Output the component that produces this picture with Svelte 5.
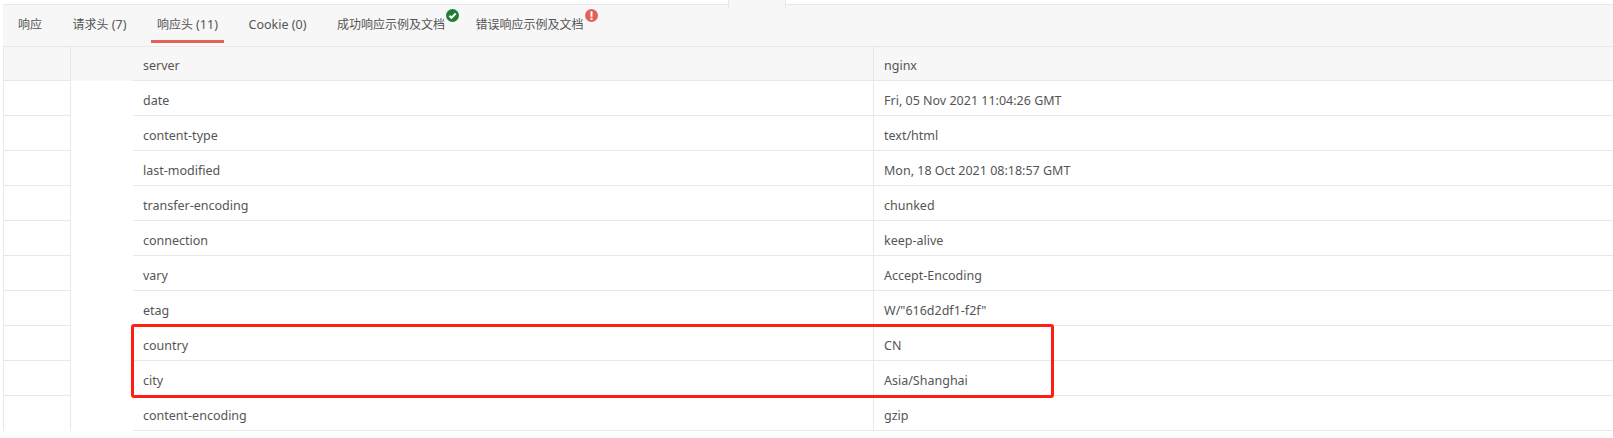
<script lang="ts">
  const headers = [
    ["server", "nginx"],
    ["date", "Fri, 05 Nov 2021 11:04:26 GMT"],
    ["content-type", "text/html"],
    ["last-modified", "Mon, 18 Oct 2021 08:18:57 GMT"],
    ["transfer-encoding", "chunked"],
    ["connection", "keep-alive"],
    ["vary", "Accept-Encoding"],
    ["etag", 'W/"616d2df1-f2f"'],
    ["country", "CN"],
    ["city", "Asia/Shanghai"],
    ["content-encoding", "gzip"],
  ];
</script>

<div class="page">
  <div class="handle"></div>

  <div class="tabs">
    <span class="tab">响应</span>
    <span class="tab">请求头 <span class="latin">(7)</span></span>
    <span class="tab active">响应头 <span class="latin">(11)</span></span>
    <span class="tab"><span class="latin">Cookie (0)</span></span>
    <span class="tab">
      成功响应示例及文档
      <svg class="badge" viewBox="0 0 13 13" width="13" height="13">
        <circle cx="6.5" cy="6.5" r="6.5" fill="#1e7e34" />
        <path d="M3.4 6.7 5.5 8.8 9.7 4.5" fill="none" stroke="#fff" stroke-width="2" />
      </svg>
    </span>
    <span class="tab">
      错误响应示例及文档
      <svg class="badge" viewBox="0 0 13 13" width="13" height="13">
        <circle cx="6.5" cy="6.5" r="6.5" fill="#e2625a" />
        <rect x="5.5" y="2.4" width="2" height="5.4" fill="#fff" />
        <rect x="5.5" y="8.8" width="2" height="2" fill="#fff" />
      </svg>
    </span>
  </div>

  <div class="table">
    {#each headers as [name, value], i}
      <div class="row" class:head={i === 0} class:last={i === headers.length - 1}>
        <div class="gutter"></div>
        <div class="spacer"></div>
        <div class="cell name">{name}</div>
        <div class="cell value">{value}</div>
      </div>
    {/each}
    <div class="highlight"></div>
  </div>
</div>

<style>
  :global(body) {
    margin: 0;
    background: #fff;
  }

  .page {
    position: relative;
    width: 1613px;
    height: 438px;
    padding-top: 4px;
    box-sizing: border-box;
    overflow: hidden;
    font-family: "Noto Sans", "Noto Sans CJK SC", sans-serif;
    font-size: 12.5px;
    color: #555;
  }

  .handle {
    position: absolute;
    left: 728px;
    top: 0;
    width: 58px;
    height: 9px;
    box-sizing: border-box;
    background: #f7f7f7;
    border-left: 1px solid #e8e8e8;
    border-right: 1px solid #e8e8e8;
    z-index: 1;
  }

  .tabs {
    display: flex;
    height: 43px;
    box-sizing: border-box;
    margin-left: 3px;
    padding-left: 9px;
    background: #f7f7f7;
    border-top: 1px solid #e8e8e8;
    border-bottom: 1px solid #e8e8e8;
  }

  .tab {
    position: relative;
    height: 38px;
    box-sizing: border-box;
    padding: 0 6px;
    margin-right: 18.6px;
    font-size: 12px;
    line-height: 40px;
    white-space: nowrap;
  }

  .latin {
    font-size: 12.5px;
  }

  .tab.active {
    border-bottom: 3px solid #e2625a;
  }

  .badge {
    position: absolute;
    left: calc(100% - 5px);
    top: 4px;
  }

  .table {
    position: relative;
  }

  .row {
    display: grid;
    grid-template-columns: 68px 62px 740px 1fr;
    height: 35px;
    margin-left: 3px;
  }

  .gutter {
    box-sizing: border-box;
    border-left: 1px solid #e8e8e8;
    border-right: 1px solid #e8e8e8;
    border-bottom: 1px solid #e8e8e8;
  }

  .row.last .gutter {
    border-bottom: none;
  }

  .cell {
    box-sizing: border-box;
    padding: 6px 0 0 10px;
    line-height: 28px;
    border-bottom: 1px solid #e8e8e8;
  }

  .value {
    border-left: 1px solid #e8e8e8;
  }

  .row.head {
    height: 34px;
    background: #f7f7f7;
  }

  .row.head .cell {
    padding-top: 5px;
  }

  .highlight {
    position: absolute;
    left: 131px;
    top: 277px;
    width: 923px;
    height: 74px;
    box-sizing: border-box;
    border: 3px solid #ff1e12;
    border-radius: 3px;
  }
</style>
